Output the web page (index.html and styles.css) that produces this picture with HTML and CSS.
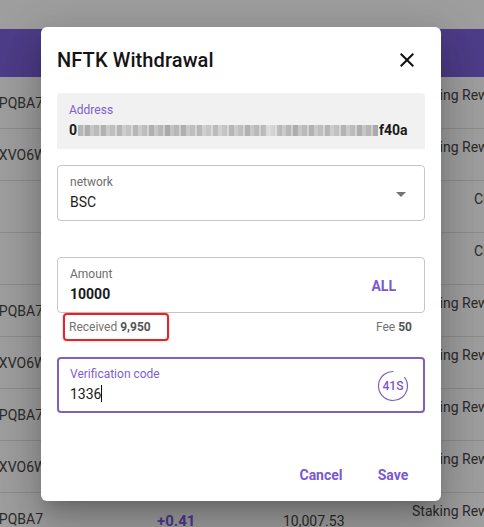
FILE: index.html
```html
<!DOCTYPE html>
<html>
<head>
    <title>NFTK Withdrawal</title>
    <link rel="stylesheet" href="styles.css">
</head>
<body>
    <!-- records table behind the modal -->
    <div class="page">
        <div class="table-head"></div>
        <div class="row"><span class="id">6PQBA7</span><span></span><span></span><span class="type">Staking Rewards</span></div>
        <div class="row"><span class="id">4XVO6W</span><span></span><span></span><span class="type">Staking Rewards</span></div>
        <div class="row"><span class="id"></span><span></span><span></span><span class="type alt">Claim</span></div>
        <div class="row"><span class="id"></span><span></span><span></span><span class="type alt">Claim</span></div>
        <div class="row"><span class="id">6PQBA7</span><span></span><span></span><span class="type">Staking Rewards</span></div>
        <div class="row"><span class="id">4XVO6W</span><span></span><span></span><span class="type">Staking Rewards</span></div>
        <div class="row"><span class="id">6PQBA7</span><span></span><span></span><span class="type">Staking Rewards</span></div>
        <div class="row"><span class="id">4XVO6W</span><span></span><span></span><span class="type">Staking Rewards</span></div>
        <div class="row"><span class="id">6PQBA7</span><span class="delta">+0.41</span><span class="balance">10,007.53</span><span class="type">Staking Rewards</span></div>
    </div>

    <div class="dialog">
        <div class="dialog-title">
            <h2>NFTK Withdrawal</h2>
            <svg class="close" viewBox="0 0 24 24" width="24" height="24">
                <path d="M19 6.41L17.59 5 12 10.59 6.41 5 5 6.41 10.59 12 5 17.59 6.41 19 12 13.41 17.59 19 19 17.59 13.41 12z"/>
            </svg>
        </div>

        <div class="field filled">
            <label class="accent">Address</label>
            <div class="value strong">0<span class="mask"></span>f40a</div>
        </div>

        <div class="field outlined select">
            <div>
                <label>network</label>
                <div class="value">BSC</div>
            </div>
            <svg class="arrow" viewBox="0 0 24 24" width="24" height="24"><path d="M7 10l5 5 5-5z"/></svg>
        </div>

        <div class="field outlined amount">
            <div>
                <label>Amount</label>
                <div class="value strong">10000</div>
            </div>
            <span class="all">ALL</span>
        </div>
        <div class="helper">
            <span class="received">Received <b>9,950</b></span>
            <span>Fee <b>50</b></span>
        </div>

        <div class="field outlined focused">
            <div>
                <label class="accent">Verification code</label>
                <div class="value">1336<span class="caret"></span></div>
            </div>
            <div class="timer">
                <svg viewBox="0 0 32 32" width="32" height="32">
                    <circle cx="16" cy="16" r="14.5" stroke-dasharray="78 13.1" transform="rotate(-38 16 16)"/>
                </svg>
                <span>41S</span>
            </div>
        </div>

        <div class="actions">
            <button>Cancel</button>
            <button>Save</button>
        </div>
    </div>
</body>
</html>
```

FILE: styles.css
```css
html, body {
    margin: 0;
    height: 100%;
    overflow: hidden;
}
body {
    font-family: Roboto, "Noto Sans", sans-serif;
    background: #9e9e9e;
    color: #2b2b2b;
}

.page {
    padding-top: 29px;
}
.table-head {
    height: 48px;
    background: #4d3c88;
}
.row {
    box-sizing: border-box;
    height: 52px;
    border-bottom: 1px solid #8c8c8c;
    display: grid;
    grid-template-columns: 157px 126px 129px 1fr;
    align-items: center;
    font-size: 14px;
    white-space: nowrap;
    overflow: hidden;
}
.id {
    margin-left: -9px;
}
.delta {
    color: #4b3a8f;
    font-weight: 700;
    font-size: 15px;
    padding-top: 5px;
}
.balance {
    padding-top: 5px;
}
.type {
    line-height: 20px;
    padding-bottom: 16px;
}
.type.alt {
    padding-left: 62px;
}

/* modal */
.dialog {
    position: absolute;
    left: 41px;
    top: 27px;
    width: 400px;
    height: 474px;
    box-sizing: border-box;
    background: #fff;
    border-radius: 6px;
    padding: 0 16px;
    box-shadow: 0 11px 15px -7px rgba(0,0,0,0.2), 0 24px 38px 3px rgba(0,0,0,0.14), 0 9px 46px 8px rgba(0,0,0,0.12);
    display: flex;
    flex-direction: column;
}
.dialog-title {
    display: flex;
    align-items: center;
    justify-content: space-between;
    height: 32px;
    margin-top: 17px;
    margin-bottom: 17px;
}
.dialog-title h2 {
    margin: 0;
    font-size: 20px;
    font-weight: 500;
    color: #141414;
    letter-spacing: 0.1px;
}
.close {
    fill: #111;
    margin-right: 6px;
}

.field {
    box-sizing: border-box;
    height: 56px;
    border-radius: 4px;
    padding: 8px 12px 0;
}
.field label {
    display: block;
    font-size: 12px;
    line-height: 16px;
    color: #6e6e6e;
}
.field .accent {
    color: #7e5fcf;
}
.value {
    font-size: 14px;
    line-height: 20px;
    margin-top: 2px;
    color: #1a1a1a;
}
.value.strong {
    font-weight: 700;
    font-size: 14px;
}
.filled {
    background: #f1f1f1;
    border-radius: 4px 4px 0 0;
    padding-top: 9px;
}
.filled .value {
    display: flex;
    align-items: center;
}
.mask {
    display: inline-block;
    width: 300px;
    height: 11px;
    margin: 0 1px;
    background:
        repeating-linear-gradient(90deg, rgba(255,255,255,0) 0 5px, rgba(255,255,255,0.35) 5px 7px, rgba(0,0,0,0.06) 7px 12px, rgba(255,255,255,0.2) 12px 16px),
        linear-gradient(90deg, #b5b5b5 0%, #c4c4c4 18%, #b3b3b3 30%, #c8c8c8 45%, #b8b8b8 60%, #d8d8d8 64%, #b6b6b6 70%, #c2c2c2 85%, #b3b3b3 100%);
}
.outlined {
    border: 1px solid #c6c6c6;
    display: flex;
    align-items: flex-start;
    justify-content: space-between;
}
.outlined > div:first-child {
    flex: 1;
}
.select {
    margin-top: 16px;
}
.select .arrow {
    fill: #747474;
    margin-top: 8px;
    margin-right: -1px;
}
.amount {
    margin-top: 36px;
}
.all {
    color: #7a58d0;
    font-weight: 700;
    font-size: 14px;
    margin-top: 12px;
    margin-right: 16px;
}
.helper {
    display: flex;
    justify-content: space-between;
    align-items: center;
    font-size: 12px;
    color: #737373;
    padding: 0 13px 0 6px;
    height: 28px;
}
.helper b {
    color: #555;
}
.received {
    border: 2px solid #e3242b;
    border-radius: 4px;
    padding: 5px 16px 5px 4px;
    box-shadow: 0 0 2px rgba(227,36,43,0.4);
}
.focused {
    border: 2px solid #7e5fc4;
    margin-top: 16px;
    padding: 7px 11px 0;
}
.caret {
    display: inline-block;
    width: 1px;
    height: 17px;
    background: #111;
    vertical-align: -3px;
}
.timer {
    position: relative;
    width: 32px;
    height: 32px;
    margin-top: 4px;
    margin-right: 3px;
}
.timer circle {
    fill: none;
    stroke: #7e5fc4;
    stroke-width: 1.2;
}
.timer span {
    position: absolute;
    inset: 0;
    display: flex;
    align-items: center;
    justify-content: center;
    font-size: 12px;
    font-weight: 500;
    color: #7a58d0;
}

.actions {
    margin-top: auto;
    margin-bottom: 8px;
    display: flex;
    justify-content: flex-end;
    gap: 8px;
}
.actions button {
    min-width: 64px;
    height: 36px;
    padding: 6px 8px;
    border: 0;
    background: none;
    font-family: inherit;
    font-size: 14px;
    font-weight: 700;
    color: #7a58d0;
}
```
